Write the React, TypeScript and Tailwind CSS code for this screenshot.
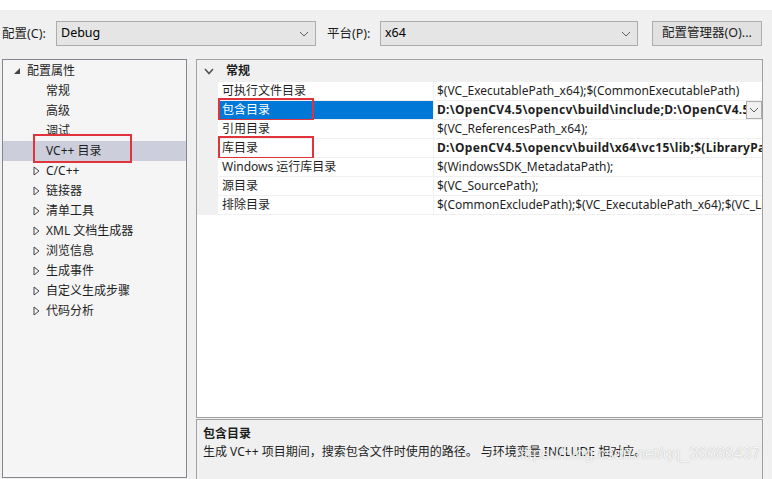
import React from 'react';

const font = '"Noto Sans", "Noto Sans CJK SC", sans-serif';

const treeItems: { label: string; expandable?: boolean; selected?: boolean; marked?: boolean }[] = [
    { label: '常规' },
    { label: '高级' },
    { label: '调试' },
    { label: 'VC++ 目录', selected: true, marked: true },
    { label: 'C/C++', expandable: true },
    { label: '链接器', expandable: true },
    { label: '清单工具', expandable: true },
    { label: 'XML 文档生成器', expandable: true },
    { label: '浏览信息', expandable: true },
    { label: '生成事件', expandable: true },
    { label: '自定义生成步骤', expandable: true },
    { label: '代码分析', expandable: true },
];

const props: { name: string; value: string; bold?: boolean; selected?: boolean; marked?: boolean }[] = [
    { name: '可执行文件目录', value: '$(VC_ExecutablePath_x64);$(CommonExecutablePath)' },
    {
        name: '包含目录',
        value: 'D:\\OpenCV4.5\\opencv\\build\\include;D:\\OpenCV4.5\\opencv\\build\\include\\opencv2;$(IncludePath)',
        bold: true,
        selected: true,
        marked: true,
    },
    { name: '引用目录', value: '$(VC_ReferencesPath_x64);' },
    {
        name: '库目录',
        value: 'D:\\OpenCV4.5\\opencv\\build\\x64\\vc15\\lib;$(LibraryPath)',
        bold: true,
        marked: true,
    },
    { name: 'Windows 运行库目录', value: '$(WindowsSDK_MetadataPath);' },
    { name: '源目录', value: '$(VC_SourcePath);' },
    { name: '排除目录', value: '$(CommonExcludePath);$(VC_ExecutablePath_x64);$(VC_LibraryPath_x64)' },
];

const Chevron = ({ className }: { className?: string }) => (
    <svg width="10" height="6" viewBox="0 0 10 6" className={className}>
        <polyline points="1,1 5,5 9,1" fill="none" stroke="#606060" strokeWidth="1" />
    </svg>
);

const Combo = ({ value, width }: { value: string; width: string }) => (
    <div
        className={`flex h-[25px] ${width} items-center justify-between border border-[#acacac] bg-[#e5e5e5] pl-[4px] pr-[6px] text-[12.5px] text-black`}
    >
        <span>{value}</span>
        <Chevron />
    </div>
);

const TreeArrow = ({ open }: { open: boolean }) =>
    open ? (
        <svg width="8" height="8" viewBox="0 0 8 8">
            <polygon points="7,1 7,7 1,7" fill="#444" />
        </svg>
    ) : (
        <svg width="7" height="10" viewBox="0 0 7 10">
            <polygon points="1,1 6,5 1,9" fill="none" stroke="#444" strokeWidth="1" />
        </svg>
    );

export default function App() {
    return (
        <div className="h-[479px] w-[772px] overflow-hidden bg-[#f0f0f0] text-[12px] text-[#1e1e1e]" style={{ fontFamily: font }}>
            <div className="h-[10px] bg-white" />

            {/* configuration / platform bar */}
            <div className="mt-[11px] flex h-[25px] items-center">
                <span className="ml-[2px] w-[54px] pt-[1px] text-[12.5px]">配置(C):</span>
                <Combo value="Debug" width="w-[260px]" />
                <span className="ml-[11px] w-[53px] pt-[1px] text-[12.5px]">平台(P):</span>
                <Combo value="x64" width="w-[258px]" />
                <button className="ml-[14px] flex h-[25px] w-[110px] items-center justify-center border border-[#adadad] bg-[#e1e1e1] text-[12.5px]">
                    配置管理器(O)...
                </button>
            </div>

            <div className="mt-[13px] flex">
                {/* property page tree */}
                <div className="ml-[2px] h-[419px] w-[185px] border border-[#828790] bg-[#f5f5f5] pt-[1px]">
                    <div className="flex h-[20px] items-center">
                        <span className="ml-[10px] mr-[6px] flex w-[8px]">
                            <TreeArrow open />
                        </span>
                        <span>配置属性</span>
                    </div>
                    {treeItems.map((item) => (
                        <div
                            key={item.label}
                            className={`relative flex h-[20px] items-center ${item.selected ? 'bg-[#cccedb]' : ''}`}
                        >
                            <span className="ml-[30px] mr-[5px] flex w-[8px]">
                                {item.expandable && <TreeArrow open={false} />}
                            </span>
                            <span>{item.label}</span>
                            {item.marked && (
                                <div className="absolute left-[30px] top-[-7px] h-[29px] w-[99px] border-2 border-[#e0343a]" />
                            )}
                        </div>
                    ))}
                </div>

                <div className="ml-[9px] flex w-[567px] flex-col">
                    {/* property grid */}
                    <div className="h-[359px] border border-[#a0a0a0] bg-white">
                        <div className="flex h-[22px] items-center bg-[#f0f0f0]">
                            <span className="ml-[7px] mr-[12px] flex">
                                <svg width="10" height="7" viewBox="0 0 10 7">
                                    <polyline points="1,1 5,5.5 9,1" fill="none" stroke="#505050" strokeWidth="1.5" />
                                </svg>
                            </span>
                            <span className="font-bold">常规</span>
                        </div>
                        {props.map((p) => (
                            <div key={p.name} className="flex h-[19px] bg-[#f0f0f0]">
                                <div className="w-[21px]" />
                                <div
                                    className={`relative flex w-[215px] items-center border-b border-[#f0f0f0] pl-[4px] ${
                                        p.selected ? 'bg-[#0078d7] text-white' : 'bg-white'
                                    }`}
                                >
                                    {p.name}
                                    {p.marked && (
                                        <div className="absolute left-[0px] top-[-3px] h-[23px] w-[96px] border-2 border-[#e0343a]" />
                                    )}
                                </div>
                                <div className="relative flex flex-1 items-center overflow-hidden border-b border-l border-[#f0f0f0] bg-white pl-[3px]">
                                    <span className={`whitespace-nowrap ${p.bold ? 'font-bold tracking-[0.3px]' : ''}`}>
                                        {p.value}
                                    </span>
                                    {p.selected && (
                                        <div className="absolute right-0 top-0 flex h-[18px] w-[16px] items-center justify-center border border-[#acacac] bg-[#f0f0f0]">
                                            <Chevron />
                                        </div>
                                    )}
                                </div>
                            </div>
                        ))}
                    </div>

                    {/* description pane */}
                    <div className="relative mt-[1px] h-[70px] border border-[#a0a0a0] bg-[#f0f0f0] px-[6px] pt-[5px]">
                        <div className="font-bold leading-[18px]">包含目录</div>
                        <div className="whitespace-nowrap leading-[18px]">
                            生成 VC++ 项目期间，搜索包含文件时使用的路径。 与环境变量 INCLUDE 相对应。
                        </div>
                        <span
                            className="absolute left-[318px] top-[22px] whitespace-nowrap text-[16px] text-white/90 [text-shadow:0_0_1px_rgba(0,0,0,0.35)]"
                            style={{ fontFamily: '"Liberation Sans", sans-serif' }}
                        >
                            https://blog.csdn.net/qq_36686437
                        </span>
                    </div>
                </div>
            </div>
        </div>
    );
}
